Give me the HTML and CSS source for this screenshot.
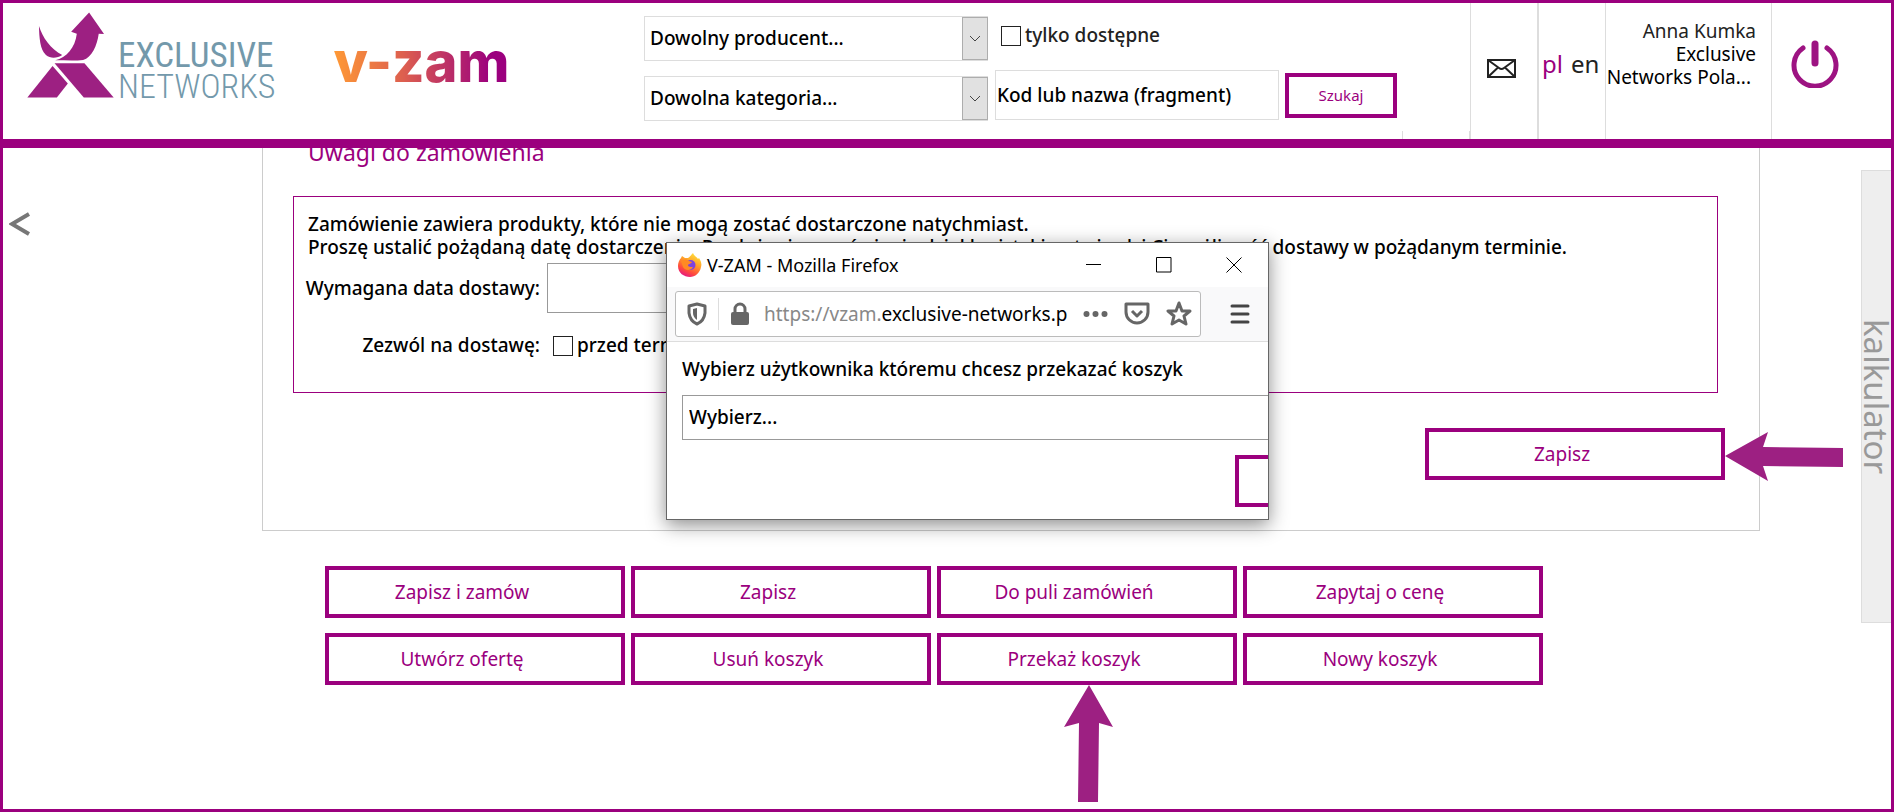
FILE: index.html
```
<!DOCTYPE html>
<html lang="pl">
  <head>
    <meta charset="UTF-8" />
    <meta name="viewport" content="width=device-width, initial-scale=1.0" />
    <title>V-ZAM</title>

    <link rel="stylesheet" href="styles.css">
  </head>

  <body>
    <header class="header">
      <div class="brand">
        <a href="#" class="logo">
          <svg class="logo-mark" viewBox="21 21 262 258" aria-hidden="true">
            <path d="M57 63 C68 98 92 132 127 150 C112 160 92 162 78 150 C60 134 58 98 57 63 Z" />
            <path d="M208 22 L253 87 L237 86 C232 122 216 158 190 165 C166 168 136 166 106 166 C140 158 166 128 171 86 L154 80 Z" />
            <path d="M98 183 L144 236 L111 278 L22 278 Z" />
            <path d="M104 175 H194 L282 278 H192 Z" />
          </svg>
          <span class="logo-text">
            <span class="logo-top">EXCLUSIVE</span>
            <span class="logo-bottom">NETWORKS</span>
          </span>
        </a>
        <a href="#" class="product">v-zam</a>
      </div>

      <form class="search">
        <div class="filters">
          <div class="select-box">
            <select aria-label="Producent">
              <option>Dowolny producent...</option>
            </select>
            <span class="select-arrow"><svg viewBox="0 0 12 8"><path d="M1 1 L6 6 L11 1" /></svg></span>
          </div>
          <div class="select-box">
            <select aria-label="Kategoria">
              <option>Dowolna kategoria...</option>
            </select>
            <span class="select-arrow"><svg viewBox="0 0 12 8"><path d="M1 1 L6 6 L11 1" /></svg></span>
          </div>
        </div>
        <div class="query">
          <label class="check available"><input type="checkbox" />tylko dostępne</label>
          <div class="query-row">
            <input type="text" class="query-input" placeholder="Kod lub nazwa (fragment)" aria-label="Kod lub nazwa" />
            <button type="submit" class="btn btn-small">Szukaj</button>
          </div>
        </div>
      </form>

      <div class="tick"></div>
      <a href="#" class="cell mail" aria-label="Wiadomości">
        <svg viewBox="0 0 29 19"><path d="M1 1 H28 V18 H1 Z M1 1 L12 9 Q14.500 11 17 9 L28 1 M1 18 L11 8.500 M28 18 L18 8.500" /></svg>
      </a>
      <nav class="cell lang">
        <a href="#" class="active">pl</a>
        <a href="#">en</a>
      </nav>
      <div class="cell user">
        <span class="user-name">Anna Kumka</span>
        <span>Exclusive</span>
        <span class="company">Networks Pola...</span>
      </div>
      <div class="cell power">
        <button type="button" aria-label="Wyloguj">
          <svg viewBox="0 0 48 48"><path d="M12 8 A21 21 0 1 0 36 8" stroke-width="5" /><path d="M24 4 V23" stroke-width="7" /></svg>
        </button>
      </div>
    </header>

    <main class="main">
      <div class="side">
        <button type="button" class="back" aria-label="Wstecz">
          <svg viewBox="0 0 21 24"><path d="M20 2 L3 12 L20 22" /></svg>
        </button>
      </div>

      <div class="content">
        <section class="panel">
          <h2>Uwagi do zamówienia</h2>
          <div class="notes">
            <p>Zamówienie zawiera produkty, które nie mogą zostać dostarczone natychmiast.</p>
            <p>Proszę ustalić pożądaną datę dostarczenia. Po złożeniu zamówienia dział logistyki potwierdzi Ci możliwość dostawy w pożądanym terminie.</p>
            <div class="fields">
              <label for="date">Wymagana data dostawy:</label>
              <input type="text" id="date" class="date" />
              <label for="before">Zezwól na dostawę:</label>
              <label class="check before"><input type="checkbox" id="before" />przed terminem</label>
            </div>
          </div>
          <div class="save">
            <button type="button" class="btn">Zapisz</button>
            <svg class="arrow-left" viewBox="0 0 118 50"><path d="M0 24 L43 0 L38 15 L118 16 V35 L38 34 L43 49 Z" /></svg>
          </div>
        </section>

        <div class="actions">
          <button type="button" class="btn">Zapisz i zamów</button>
          <button type="button" class="btn">Zapisz</button>
          <button type="button" class="btn">Do puli zamówień</button>
          <button type="button" class="btn">Zapytaj o cenę</button>
          <button type="button" class="btn">Utwórz ofertę</button>
          <button type="button" class="btn">Usuń koszyk</button>
          <div class="pointed">
            <button type="button" class="btn">Przekaż koszyk</button>
            <svg class="arrow-up" viewBox="0 0 50 118"><path d="M25 0 L49 42 L35 38 L34 117 H14 L15 38 L0 42 Z" /></svg>
          </div>
          <button type="button" class="btn">Nowy koszyk</button>
        </div>
      </div>

      <div class="side side-right">
        <button type="button" class="calc">kalkulator</button>
      </div>
    </main>

    <div class="window">
      <div class="titlebar">
        <svg class="firefox" viewBox="0 0 24 24" aria-hidden="true">
          <defs>
            <linearGradient id="flame" x1="0.800" y1="0" x2="0.300" y2="1">
              <stop offset="0" stop-color="#ffe83b" />
              <stop offset="0.400" stop-color="#ffa02a" />
              <stop offset="0.750" stop-color="#ff4a3d" />
              <stop offset="1" stop-color="#e31587" />
            </linearGradient>
          </defs>
          <path fill="url(#flame)" d="M3 5 L4 3 L7 5 L10 5 C12 4 13 2 15 0 C16 3 19 4 20 6 L21 5 C23 8 24 11 23 14 C22 20 17 24 12 24 C6 24 0 20 0 13 C0 10 1 7 3 5 Z" />
          <circle cx="12.500" cy="12" r="5" fill="#7b42e0" />
          <path fill="#ff8a24" d="M3 8 C6 6 9 6 11 8 L14 9 C13 11 10 11 10 12 C10 14 13 14 15 14 C13 18 7 18 5 14 Z" />
        </svg>
        <span class="window-title">V-ZAM - Mozilla Firefox</span>
        <button type="button" aria-label="Minimalizuj"><svg viewBox="0 0 16 16"><path d="M0 7.500 H15" /></svg></button>
        <button type="button" aria-label="Maksymalizuj"><svg viewBox="0 0 16 16"><path d="M0.500 0.500 H15 V15 H0.500 Z" /></svg></button>
        <button type="button" aria-label="Zamknij"><svg viewBox="0 0 16 16"><path d="M0.500 0.500 L15.500 15.500 M15.500 0.500 L0.500 15.500" /></svg></button>
      </div>
      <div class="toolbar">
        <div class="urlbar">
          <svg class="shield" viewBox="0 0 20 24"><path fill="none" stroke="#666" stroke-width="3" stroke-linejoin="round" d="M10 2 L18 4 V11 Q17 19 10 22 Q3 19 2 11 V4 Z" /><path fill="#666" d="M10 6 V18 Q6 15 6 11 V7 Z" /></svg>
          <span class="divider"></span>
          <svg class="lock" viewBox="0 0 20 24"><path fill="none" stroke="#666" stroke-width="3" d="M5 11 V7 A5 5 0 0 1 15 7 V11" /><rect x="1" y="10" width="18" height="13" rx="2" fill="#666" /></svg>
          <span class="url">https://vzam.<b>exclusive-networks.p</b></span>
          <svg class="dots" viewBox="0 0 25 24"><circle cx="3.500" cy="12" r="3" /><circle cx="12.500" cy="12" r="3" /><circle cx="21.500" cy="12" r="3" /></svg>
          <svg class="tool" viewBox="0 0 26 26"><path d="M2 3 H24 V11 A11 11 0 0 1 2 11 Z" /><path d="M8 10 L13 15 L18 10" /></svg>
          <svg class="tool" viewBox="0 0 26 26"><path d="M13 2 L16 10 L24 10 L18 15 L20 23 L13 19 L6 23 L8 15 L2 10 L10 10 Z" /></svg>
        </div>
        <button type="button" class="menu" aria-label="Menu"><svg viewBox="0 0 20 20"><path d="M2 2 H18 M2 10 H18 M2 18 H18" /></svg></button>
      </div>
      <div class="window-body">
        <label for="recipient">Wybierz użytkownika któremu chcesz przekazać koszyk</label>
        <select id="recipient" class="recipient">
          <option>Wybierz...</option>
        </select>
        <button type="button" class="btn window-save" aria-label="Przekaż"></button>
      </div>
    </div>
  </body>
</html>
```
FILE: styles.css
```
* {
  margin: 0;
  padding: 0;
  box-sizing: border-box;
}

body {
  font-family: "Noto Sans", "Open Sans", sans-serif;
  font-size: 19px;
  font-weight: 500;
  line-height: 23px;
  color: #000;
  background-color: #fff;
  border: 3px solid #9b007e;
  min-height: 100vh;
  position: relative;
}

a {
  color: #222;
  text-decoration: none;
}

input,
select,
button {
  font: inherit;
  color: inherit;
  background-color: #fff;
}

svg {
  display: block;
}

.header {
  display: flex;
  height: 145px;
  background-color: #fff;
  border-bottom: 9px solid #9b007e;
  position: relative;
  z-index: 1;
}

.brand {
  display: flex;
  flex: 0 0 641px;
  padding: 9px 0 0 24px;
}

.logo {
  display: flex;
  gap: 4px;
}

.logo-mark {
  width: 87px;
  height: 86px;
  fill: #9d2082;
}

.logo-text {
  display: flex;
  flex-direction: column;
  padding-top: 29px;
  font-family: "Roboto Condensed", "Roboto", sans-serif;
  color: #7399ab;
  line-height: 30px;
}

.logo-top {
  font-size: 35px;
  font-weight: 400;
}

.logo-bottom {
  font-size: 34px;
  font-weight: 300;
}

.product {
  align-self: flex-start;
  margin: 20px 0 0 58px;
  font-family: Inter, sans-serif;
  font-size: 56px;
  font-weight: 800;
  line-height: 60px;
  color: transparent;
  background: linear-gradient(90deg, #ff9a35, #dd5f4f 40%, #9b007e 90%);
  -webkit-background-clip: text;
  background-clip: text;
}

.search {
  display: flex;
  flex: 1;
  gap: 7px;
  padding-top: 13px;
}

.filters {
  display: flex;
  flex-direction: column;
  gap: 15px;
  width: 344px;
}

.select-box {
  position: relative;
}

.select-box select {
  appearance: none;
  width: 100%;
  height: 45px;
  padding: 0 32px 0 5px;
  border: 1px solid #ddd;
  border-radius: 0;
}

.select-arrow {
  position: absolute;
  top: 1px;
  right: 0;
  bottom: 1px;
  width: 26px;
  display: flex;
  align-items: center;
  justify-content: center;
  background-color: #e1e1e1;
  border: 1px solid #adadad;
  pointer-events: none;
}

.select-arrow svg {
  width: 12px;
  fill: none;
  stroke: #444;
}

.query {
  display: flex;
  flex-direction: column;
}

.check {
  display: flex;
  align-items: center;
  gap: 4px;
}

.check input {
  appearance: none;
  width: 20px;
  height: 20px;
  border: 1px solid #222;
}

.available {
  padding: 8px 0 0 6px;
  color: #222;
}

.query-row {
  display: flex;
  align-items: center;
  gap: 6px;
  margin-top: 23px;
}

.query-input {
  width: 284px;
  height: 50px;
  padding: 0 1px;
  border: 1px solid #ddd;
}

.query-input::placeholder {
  color: #000;
  opacity: 1;
}

.btn {
  width: 300px;
  height: 52px;
  padding-right: 26px;
  font-weight: 400;
  color: #9b007e;
  border: 4px solid #9b007e;
  cursor: pointer;
}

.btn-small {
  width: 112px;
  height: 45px;
  padding: 0;
  font-size: 15px;
}

.tick {
  align-self: flex-end;
  width: 68px;
  height: 8px;
  border: 1px solid #ddd;
  border-width: 0 1px;
}

.cell {
  border-left: 1px solid #ddd;
}

.mail {
  width: 68px;
  padding: 56px 0 0 16px;
  border-right: 1px solid #ddd;
}

.mail svg {
  width: 29px;
  fill: none;
  stroke: #222;
  stroke-width: 2;
}

.lang {
  display: flex;
  gap: 8px;
  width: 67px;
  padding: 45px 0 0 3px;
  font-size: 24px;
  line-height: 32px;
}

.lang a {
  font-weight: 400;
}

.lang .active {
  color: #9b007e;
}

.user {
  display: flex;
  flex-direction: column;
  align-items: flex-end;
  width: 166px;
  padding: 17px 15px 0 0;
  font-weight: 400;
  white-space: nowrap;
}

.user-name {
  color: #222;
}

.company {
  padding-right: 5px;
}

.power {
  width: 120px;
  padding: 37px 0 0 19px;
}

.power button {
  border: 0;
  cursor: pointer;
}

.power svg {
  width: 48px;
  fill: none;
  stroke: #9d1382;
  stroke-linecap: round;
}

.main {
  display: grid;
  grid-template-columns: 259px 1fr 131px;
}

.side {
  padding-top: 64px;
}

.back {
  margin-left: 6px;
  border: 0;
}

.back svg {
  width: 21px;
  fill: none;
  stroke: #777;
  stroke-width: 4;
}

.side-right {
  padding-top: 22px;
}

.calc {
  display: block;
  width: 30px;
  height: 453px;
  margin-left: auto;
  font-size: 33px;
  font-weight: 400;
  line-height: 29px;
  writing-mode: vertical-rl;
  color: #999;
  background-color: #eee;
  border: 1px solid #ddd;
  border-right: 0;
}

.panel {
  padding: 0 34px 50px 30px;
  border: 1px solid #ccc;
  border-top: 0;
}

.panel h2 {
  margin: -12px 0 28px 15px;
  font-size: 23px;
  font-weight: 400;
  line-height: 32px;
  color: #9b007e;
}

.notes {
  margin-right: 7px;
  padding: 16px 14px 35px;
  border: 1px solid #9b007e;
}

.fields {
  display: grid;
  grid-template-columns: 240px 1fr;
  gap: 21px 7px;
  align-items: center;
  margin: 4px 0 0 -8px;
}

.fields > label:first-child,
.fields > label[for="before"] {
  text-align: right;
  white-space: nowrap;
}

.date {
  width: 300px;
  height: 50px;
  border: 1px solid #999;
}

.before {
  padding-left: 6px;
}

.save {
  position: relative;
  width: 300px;
  margin: 35px 0 0 auto;
}

.save .btn {
  display: block;
}

.arrow-left {
  position: absolute;
  top: 4px;
  left: 100%;
  width: 118px;
  fill: #9d2082;
}

.actions {
  display: grid;
  grid-template-columns: repeat(4, 1fr);
  gap: 15px 6px;
  margin: 35px 217px 0 63px;
}

.actions .btn {
  display: block;
  width: 100%;
}

.pointed {
  position: relative;
}

.arrow-up {
  position: absolute;
  top: 100%;
  left: 127px;
  width: 50px;
  fill: #9d2082;
}

.window {
  position: absolute;
  top: 239px;
  left: 663px;
  z-index: 2;
  width: 603px;
  height: 278px;
  overflow: hidden;
  background-color: #fff;
  border: 1px solid #666;
  box-shadow: 0 5px 18px rgba(0, 0, 0, 0.45);
}

.titlebar {
  display: flex;
  align-items: center;
  height: 44px;
  padding: 0 26px 0 11px;
}

.firefox {
  width: 24px;
}

.window-title {
  flex: 1;
  padding-left: 5px;
  font-size: 18px;
  font-weight: 400;
}

.titlebar button {
  margin-left: 54px;
  border: 0;
}

.titlebar button svg {
  width: 16px;
  fill: none;
  stroke: #000;
}

.toolbar {
  display: flex;
  align-items: center;
  height: 55px;
  padding: 0 18px 0 8px;
  background-color: #f9f9fa;
  border-bottom: 1px solid #ddd;
}

.urlbar {
  display: flex;
  flex: 1;
  align-items: center;
  height: 46px;
  padding: 0 8px 0 11px;
  background-color: #fff;
  border: 1px solid #bbb;
  border-radius: 3px;
}

.shield,
.lock {
  width: 20px;
}

.divider {
  width: 1px;
  height: 32px;
  margin: 0 11px;
  background-color: #ddd;
}

.url {
  flex: 1;
  padding-left: 14px;
  font-weight: 400;
  color: #888;
  white-space: nowrap;
}

.url b {
  font-weight: 400;
  color: #000;
}

.dots {
  width: 25px;
  fill: #666;
}

.tool {
  width: 26px;
  margin-left: 16px;
  fill: none;
  stroke: #666;
  stroke-width: 3;
  stroke-linejoin: round;
}

.menu {
  margin-left: 29px;
  background: none;
  border: 0;
}

.menu svg {
  width: 20px;
  fill: none;
  stroke: #444;
  stroke-width: 3;
  stroke-linecap: round;
}

.window-body {
  display: flex;
  flex-direction: column;
  padding: 16px 0 0 15px;
}

.recipient {
  appearance: none;
  width: 640px;
  height: 45px;
  margin-top: 14px;
  padding-left: 6px;
  border: 1px solid #999;
  border-radius: 0;
}

.window-save {
  width: 120px;
  margin: 15px 0 0 553px;
}
```
